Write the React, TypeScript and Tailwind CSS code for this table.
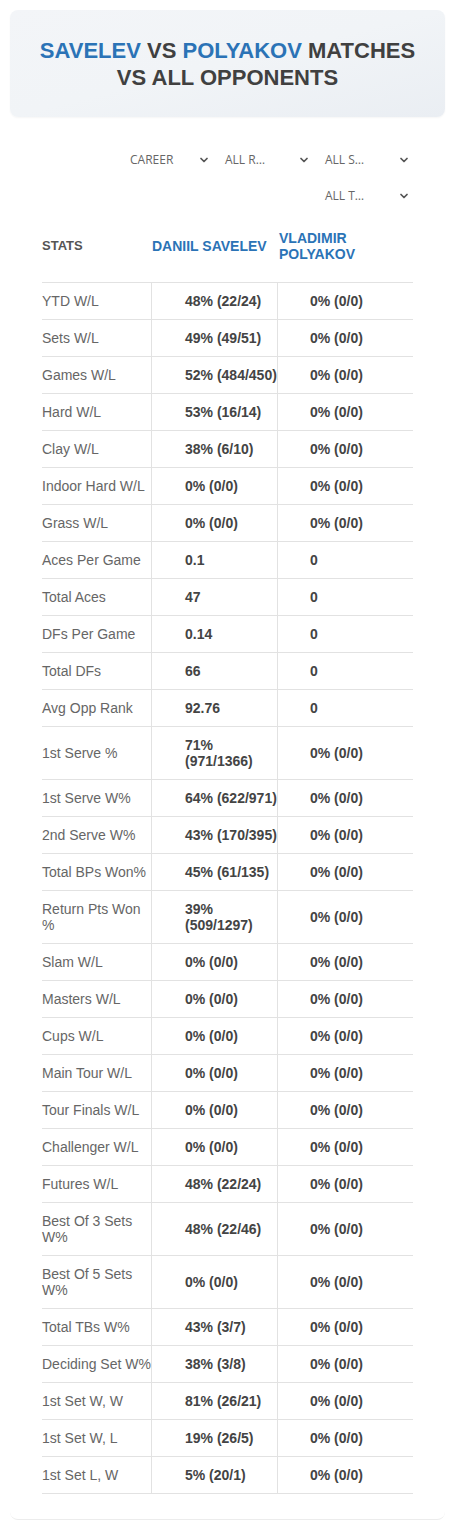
import { ChevronDown } from "lucide-react";

const rows: [string, string, string][] = [
  ["YTD W/L", "48% (22/24)", "0% (0/0)"],
  ["Sets W/L", "49% (49/51)", "0% (0/0)"],
  ["Games W/L", "52% (484/450)", "0% (0/0)"],
  ["Hard W/L", "53% (16/14)", "0% (0/0)"],
  ["Clay W/L", "38% (6/10)", "0% (0/0)"],
  ["Indoor Hard W/L", "0% (0/0)", "0% (0/0)"],
  ["Grass W/L", "0% (0/0)", "0% (0/0)"],
  ["Aces Per Game", "0.1", "0"],
  ["Total Aces", "47", "0"],
  ["DFs Per Game", "0.14", "0"],
  ["Total DFs", "66", "0"],
  ["Avg Opp Rank", "92.76", "0"],
  ["1st Serve %", "71% (971/1366)", "0% (0/0)"],
  ["1st Serve W%", "64% (622/971)", "0% (0/0)"],
  ["2nd Serve W%", "43% (170/395)", "0% (0/0)"],
  ["Total BPs Won%", "45% (61/135)", "0% (0/0)"],
  ["Return Pts Won %", "39% (509/1297)", "0% (0/0)"],
  ["Slam W/L", "0% (0/0)", "0% (0/0)"],
  ["Masters W/L", "0% (0/0)", "0% (0/0)"],
  ["Cups W/L", "0% (0/0)", "0% (0/0)"],
  ["Main Tour W/L", "0% (0/0)", "0% (0/0)"],
  ["Tour Finals W/L", "0% (0/0)", "0% (0/0)"],
  ["Challenger W/L", "0% (0/0)", "0% (0/0)"],
  ["Futures W/L", "48% (22/24)", "0% (0/0)"],
  ["Best Of 3 Sets W%", "48% (22/46)", "0% (0/0)"],
  ["Best Of 5 Sets W%", "0% (0/0)", "0% (0/0)"],
  ["Total TBs W%", "43% (3/7)", "0% (0/0)"],
  ["Deciding Set W%", "38% (3/8)", "0% (0/0)"],
  ["1st Set W, W", "81% (26/21)", "0% (0/0)"],
  ["1st Set W, L", "19% (26/5)", "0% (0/0)"],
  ["1st Set L, W", "5% (20/1)", "0% (0/0)"],
];

function Filter({ label, first = false }: { label: string; first?: boolean }) {
  return (
    <div
      className={`flex h-9 w-[100px] items-center justify-between pr-[15px] text-[12px] text-[#666] ${
        first ? "pl-[5px]" : "pl-0"
      }`}
    >
      <span>{label}</span>
      <ChevronDown className="h-3 w-3 text-[#555]" strokeWidth={3.5} />
    </div>
  );
}

export default function App() {
  return (
    <div className="w-[455px] bg-white font-[family-name:Liberation_Sans,Arial,sans-serif]">
      <div className="mx-[10px] pt-[10px]">
        <div className="flex h-[107px] items-center justify-center rounded-lg bg-gradient-to-br from-[#f3f5f8] via-[#f1f4f7] to-[#eaeef3] px-2 shadow-[0_1px_2px_rgba(0,0,0,0.04)]">
          <h1 className="text-center text-[22px] font-bold leading-[27px] text-[#404040]">
            <span className="text-[#2b73b6]">SAVELEV</span> VS{" "}
            <span className="text-[#2b73b6]">POLYAKOV</span> MATCHES
            <br />
            VS ALL OPPONENTS
          </h1>
        </div>
      </div>

      <div className="mx-[10px] rounded-b-lg border-b border-[#ececec] pb-[25px] pl-[32px] pr-[20px]">
        <div className="ml-auto mt-[25px] flex w-[300px] flex-wrap justify-end font-[family-name:Open_Sans,sans-serif]">
          <Filter label="CAREER" first />
          <Filter label="ALL R…" />
          <Filter label="ALL S…" />
          <Filter label="ALL T…" />
        </div>

        <div className="w-[371px]">
          <div className="flex h-[68px] items-center pb-[4px] font-bold">
            <div className="w-[110px] text-[13px] text-[#555]">STATS</div>
            <div className="w-[126px] text-[14px] leading-4 text-[#2b73b6]">DANIIL SAVELEV</div>
            <div className="w-[135px] pl-px text-[14px] leading-4 text-[#2b73b6]">
              VLADIMIR
              <br />
              POLYAKOV
            </div>
          </div>

          <div className="border-t border-[#e2e2e2]">
            {rows.map(([label, a, b]) => (
              <div key={label} className="flex border-b border-[#e2e2e2] text-[14px] leading-4">
                <div className="flex w-[110px] items-center border-r border-[#e2e2e2] py-[10px] text-[#666]">
                  {label}
                </div>
                <div className="flex w-[126px] items-center border-r border-[#e2e2e2] py-[10px] pl-[33px] font-bold text-[#444]">
                  {a}
                </div>
                <div className="flex w-[135px] items-center py-[10px] pl-[32px] font-bold text-[#444]">
                  {b}
                </div>
              </div>
            ))}
          </div>
        </div>
      </div>
    </div>
  );
}
